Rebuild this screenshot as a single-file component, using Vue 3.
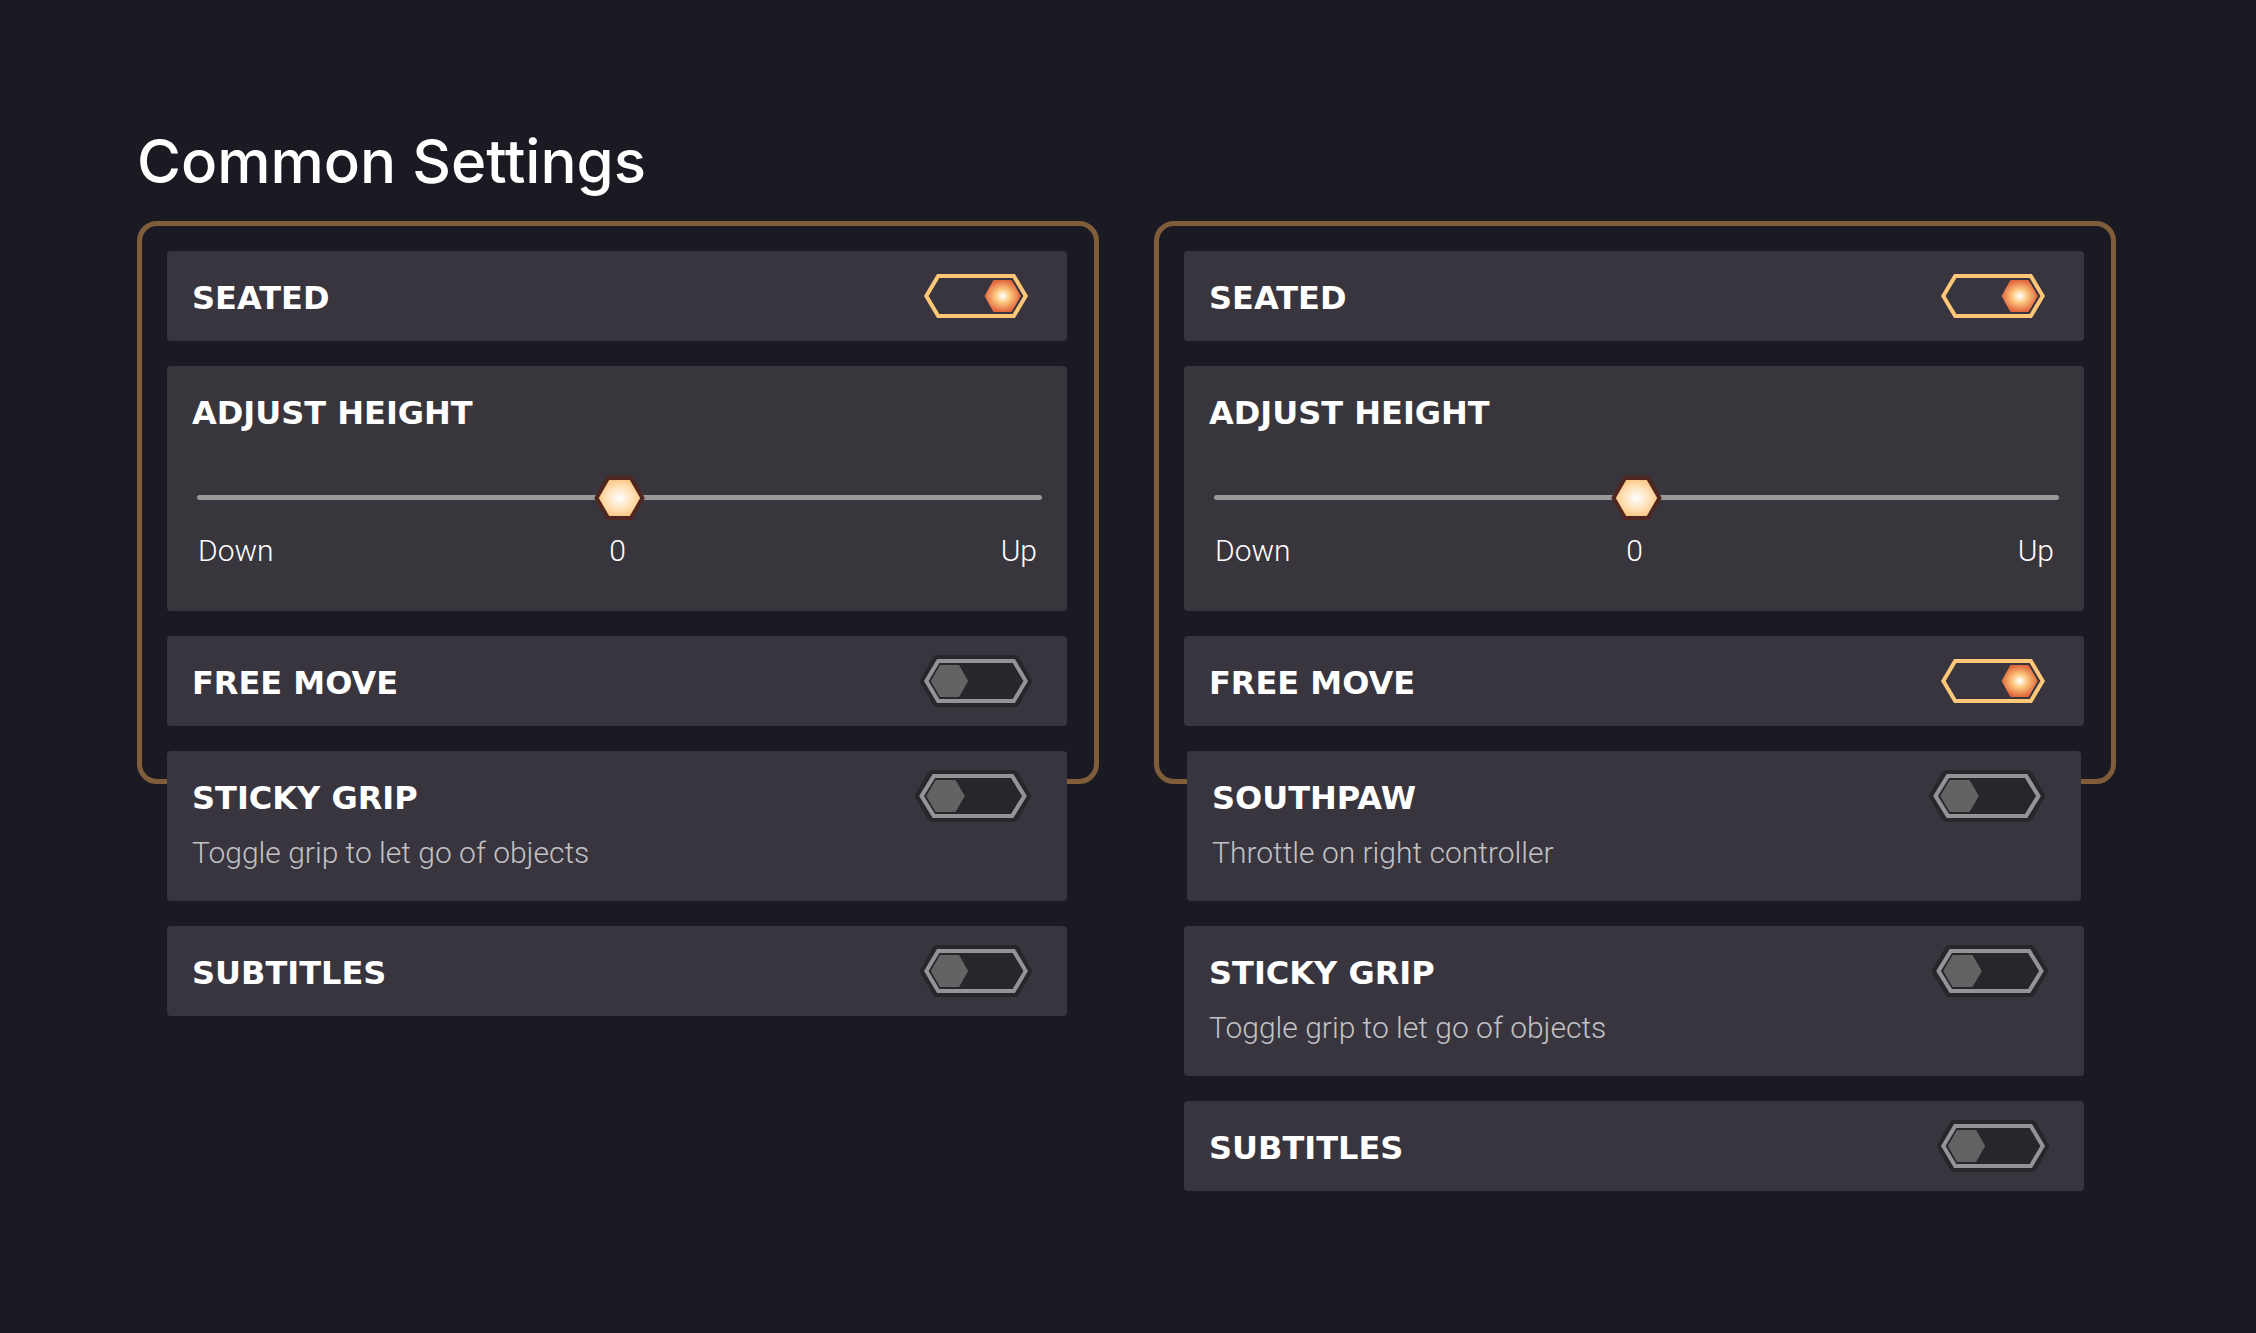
<script setup>
import { reactive } from 'vue'

const sticky = () => ({ id: 'sticky', title: 'STICKY GRIP', note: 'Toggle grip to let go of objects', on: false })
const subtitles = () => ({ id: 'subtitles', title: 'SUBTITLES', on: false })
const framed = (freeMove) => [
  { id: 'seated', title: 'SEATED', on: true },
  { id: 'height', title: 'ADJUST HEIGHT', slider: true, value: 0 },
  { id: 'free-move', title: 'FREE MOVE', on: freeMove }
]

const panels = reactive([
  {
    id: 'left',
    groups: [
      { name: 'frame', rows: framed(false) },
      { name: 'rest', rows: [sticky(), subtitles()] }
    ]
  },
  {
    id: 'right',
    groups: [
      { name: 'frame', rows: framed(true) },
      {
        name: 'rest',
        rows: [
          { id: 'southpaw', title: 'SOUTHPAW', note: 'Throttle on right controller', on: false, inset: true },
          sticky(),
          subtitles()
        ]
      }
    ]
  }
])
</script>

<template>
  <main class="page">
    <svg class="defs" aria-hidden="true">
      <defs>
        <radialGradient id="glow">
          <stop offset="0" stop-color="#ffffff" />
          <stop offset="0.14" stop-color="#fff0d8" />
          <stop offset="0.42" stop-color="#fdc77d" />
          <stop offset="1" stop-color="#e0663c" />
        </radialGradient>
      </defs>
      <symbol id="toggle-on" viewBox="0 0 112 52" preserveAspectRatio="none">
        <path d="M6.3 26 18.2 6H93.8L105.7 26 93.8 46H18.2Z" fill="none" stroke="#ffc878" stroke-width="4" />
        <path d="M64.5 26 73 10.8 74 10H91L92 10.8 100.9 26 92 41.2 91 42H74L73 41.2Z" fill="url(#glow)" />
      </symbol>
      <symbol id="toggle-off" viewBox="0 0 112 52" preserveAspectRatio="none">
        <path d="M4 26 16.5 4H95.5L108 26 95.5 48H16.5Z" fill="#28252b" stroke="#28252b" stroke-width="8" stroke-linejoin="round" />
        <path d="M6.3 26 18.2 6H93.8L105.7 26 93.8 46H18.2Z" fill="none" stroke="#949397" stroke-width="4" />
        <path d="M12 26 20.5 11H38.5L47 26 38.5 41H20.5Z" fill="#636363" stroke="#636363" stroke-width="2" stroke-linejoin="round" />
      </symbol>
    </svg>

    <h1 class="title">Common Settings</h1>

    <div class="columns">
      <section v-for="panel in panels" :key="panel.id" class="column">
        <div v-for="group in panel.groups" :key="group.name" :class="group.name">
          <div
            v-for="row in group.rows"
            :key="row.id"
            class="card"
            :class="{ slider: row.slider, noted: row.note, inset: row.inset }"
          >
            <div class="text">
              <label class="name" :for="`${panel.id}-${row.id}`">{{ row.title }}</label>
              <p v-if="row.note" class="note">{{ row.note }}</p>
            </div>
            <template v-if="row.slider">
              <input
                :id="`${panel.id}-${row.id}`"
                v-model.number="row.value"
                class="range"
                type="range"
                min="-100"
                max="100"
              />
              <div class="scale">
                <span>Down</span>
                <span>{{ row.value }}</span>
                <span>Up</span>
              </div>
            </template>
            <span v-else class="toggle">
              <input :id="`${panel.id}-${row.id}`" v-model="row.on" type="checkbox" />
              <svg aria-hidden="true">
                <use :href="row.on ? '#toggle-on' : '#toggle-off'" />
              </svg>
            </span>
          </div>
        </div>
      </section>
    </div>
  </main>
</template>

<style>
body {
  background: #1b1922;
}
</style>

<style scoped>
.page {
  box-sizing: border-box;
  min-height: 100vh;
  padding: 125px 140px 125px 137px;
  color: #fff;
  font-family: Roboto, "Liberation Sans", sans-serif;
}

.defs {
  display: block;
  width: 0;
  height: 0;
}

.title {
  margin: 0 0 24px;
  font: 500 60px/72px Inter, sans-serif;
}

.columns {
  display: grid;
  grid-template-columns: 1fr 1fr;
  gap: 55px;
  align-items: start;
}

.frame {
  display: grid;
  gap: 25px;
  padding: 25px 27px 53px 25px;
  border: 5px solid #7f5d3b;
  border-radius: 20px;
}

/* The remaining rows overlap the lower edge of the frame */
.rest {
  position: relative;
  display: grid;
  gap: 25px;
  margin: -33px 32px 0 30px;
}

.card {
  box-sizing: border-box;
  display: flex;
  justify-content: space-between;
  align-items: flex-start;
  min-height: 90px;
  padding: 19px 35px 15px 25px;
  border-radius: 4px;
  background: #38353f;
}

.card.noted {
  min-height: 150px;
  padding-right: 36px;
}

.card.inset {
  margin: 0 3px;
}

.card.slider {
  flex-direction: column;
  justify-content: flex-start;
  align-items: stretch;
  min-height: 245px;
  padding-right: 25px;
  background: #38363c;
}

.name {
  display: block;
  font: 700 32px/56px "DejaVu Sans", sans-serif;
}

.note {
  margin: 0;
  color: #c3c2c5;
  font-size: 30px;
  font-weight: 300;
  line-height: 54px;
}

.toggle {
  display: grid;
  width: 112px;
  height: 52px;
}

.noted .toggle {
  width: 116px;
}

.toggle > * {
  grid-area: 1 / 1;
  width: 100%;
  height: 100%;
  margin: 0;
}

.toggle input {
  opacity: 0;
  cursor: pointer;
}

.toggle svg {
  display: block;
  pointer-events: none;
}

.range {
  display: block;
  height: 44px;
  margin: 34px 0 0 5px;
  appearance: none;
  background: none;
}

.range::-webkit-slider-runnable-track {
  height: 5px;
  border-radius: 3px;
  background: #999;
}

.range::-webkit-slider-thumb {
  width: 51px;
  height: 44px;
  margin-top: -19px;
  border: 0;
  appearance: none;
  background: url("data:image/svg+xml,%3Csvg xmlns='http://www.w3.org/2000/svg' viewBox='0 0 51 44'%3E%3CradialGradient id='g' r='.6'%3E%3Cstop stop-color='%23fff'/%3E%3Cstop offset='.5' stop-color='%23ffe0b4'/%3E%3Cstop offset='1' stop-color='%23f8b262'/%3E%3C/radialGradient%3E%3Cpath d='M2.5 22 14 2H37L48.5 22 37 42H14Z' fill='url(%23g)' stroke='%234f2721' stroke-width='4'/%3E%3C/svg%3E") center / 100% 100% no-repeat;
}

.scale {
  display: grid;
  grid-template-columns: 1fr auto 1fr;
  padding: 12px 5px 0 6px;
  font-size: 30px;
  font-weight: 300;
  line-height: 40px;
}

.scale span:last-child {
  text-align: right;
}
</style>
